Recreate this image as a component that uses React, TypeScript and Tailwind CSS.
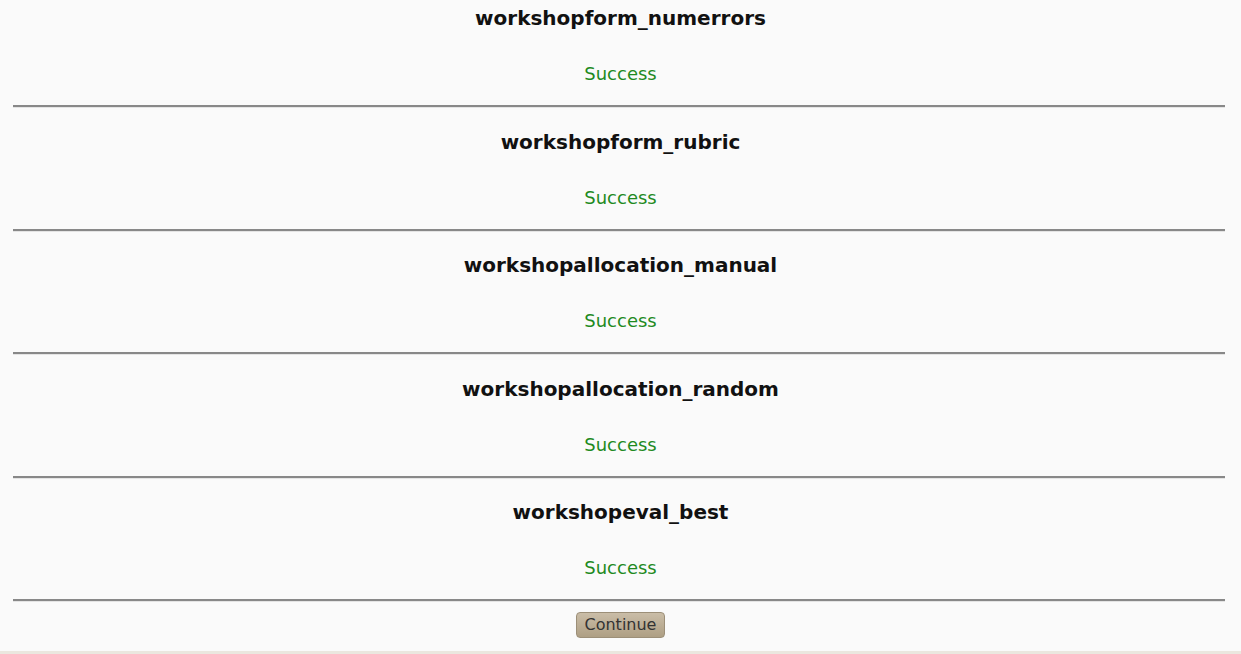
import React from "react";

const results = [
  "workshopform_numerrors",
  "workshopform_rubric",
  "workshopallocation_manual",
  "workshopallocation_random",
  "workshopeval_best",
];

export default function App() {
  return (
    <div className="w-[1241px] h-[654px] bg-[#fafafa] flex flex-col font-['DejaVu_Sans',Verdana,sans-serif] overflow-hidden">
      <div className="flex-1 pt-[7px]">
        {results.map((name, i) => (
          <div key={name} className={i > 0 ? "pt-[22.5px]" : ""}>
            <h2 className="text-center text-[20px] leading-[23px] font-bold text-[#111]">{name}</h2>
            <p className="mt-[33px] text-center text-[18px] leading-[21px] text-[#1f8a1f]">Success</p>
            <hr className="mt-[21px] ml-[13px] mr-[16px] h-0 border-0 border-t-2 border-t-[#888] border-b border-b-[#e4e4e4]" />
          </div>
        ))}
        <div className="flex justify-center pt-[10px]">
          <button className="h-[26px] px-[8px] rounded-[4px] border border-[#9c8f78] bg-gradient-to-b from-[#cabda7] to-[#ae9f84] text-[16px] leading-[18px] text-[#333]">
            Continue
          </button>
        </div>
      </div>
      <div className="h-[3px] bg-[#ebe7df]" />
    </div>
  );
}
